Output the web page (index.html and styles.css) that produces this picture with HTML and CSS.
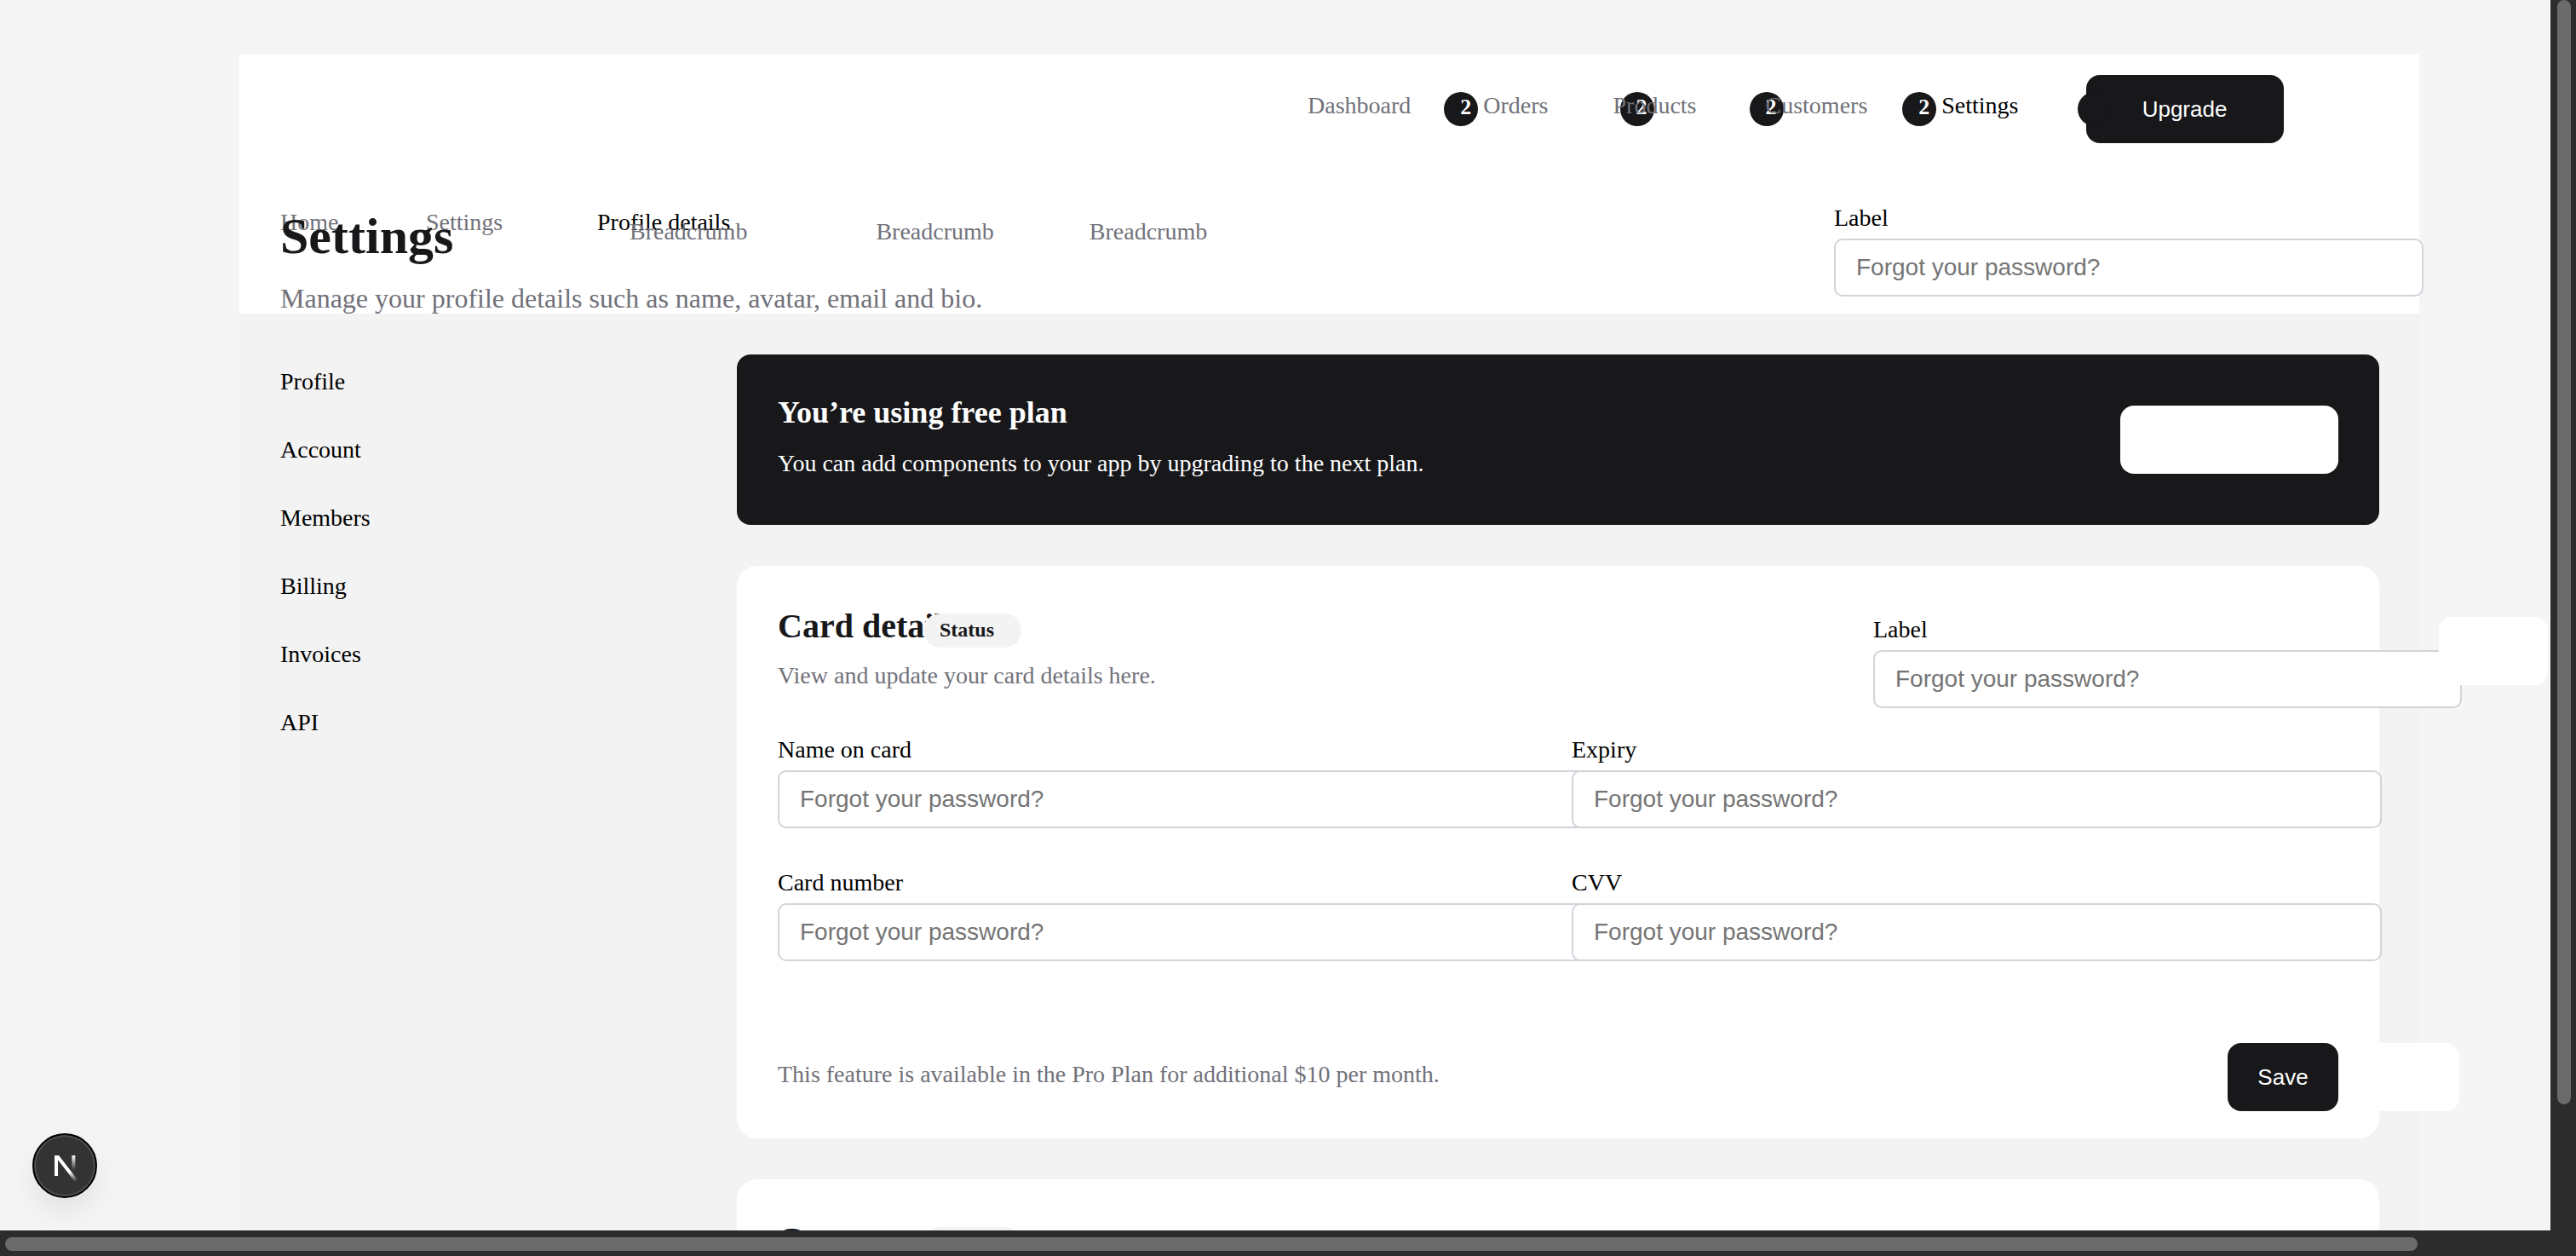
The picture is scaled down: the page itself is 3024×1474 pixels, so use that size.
FILE: index.html
```html
<!DOCTYPE html>
<html lang="en">
<head>
    <meta charset="UTF-8">
    <meta name="viewport" content="width=device-width, initial-scale=1.0">
    <title>Settings</title>
    <link rel="stylesheet" href="styles.css">
</head>
<body>
    <div class="page">
        <header class="header">
            <nav class="nav">
                <a class="nav-link dashboard">Dashboard</a>
                <a class="nav-link orders"><span class="badge">2</span>Orders</a>
                <a class="nav-link products"><span class="badge">2</span>Products</a>
                <a class="nav-link customers"><span class="badge">2</span>Customers</a>
                <a class="nav-link settings active"><span class="badge">2</span>Settings</a>
                <button class="button upgrade"><span class="badge"></span>Upgrade</button>
            </nav>
            <div class="header-row">
                <div class="title-block">
                    <div class="crumbs">
                        <span class="crumb home">Home</span>
                        <span class="crumb middle">Settings</span>
                        <span class="crumb active">Profile details</span>
                    </div>
                    <div class="crumbs second">
                        <span class="crumb">Breadcrumb</span>
                        <span class="crumb">Breadcrumb</span>
                        <span class="crumb">Breadcrumb</span>
                    </div>
                    <div class="title-text">
                        <h1>Settings</h1>
                        <p>Manage your profile details such as name, avatar, email and bio.</p>
                    </div>
                </div>
                <div class="field header-field">
                    <label>Label</label>
                    <input class="input" placeholder="Forgot your password?">
                </div>
            </div>
        </header>

        <div class="content">
            <aside class="sidebar">
                <a>Profile</a>
                <a>Account</a>
                <a>Members</a>
                <a>Billing</a>
                <a>Invoices</a>
                <a>API</a>
            </aside>
            <main class="main">
                <section class="banner">
                    <div class="banner-text">
                        <h2>You’re using free plan</h2>
                        <p>You can add components to your app by upgrading to the next plan.</p>
                    </div>
                    <button class="button white">Upgrade</button>
                </section>

                <section class="card">
                    <div class="card-head">
                        <div class="card-title">
                            <div class="title-line">
                                <h3>Card details</h3>
                                <span class="status">Status</span>
                            </div>
                            <p>View and update your card details here.</p>
                        </div>
                        <div class="field card-field">
                            <label>Label</label>
                            <input class="input" placeholder="Forgot your password?">
                        </div>
                        <button class="button white floating">Save</button>
                    </div>
                    <div class="form">
                        <div class="field">
                            <label>Name on card</label>
                            <input class="input" placeholder="Forgot your password?">
                        </div>
                        <div class="field">
                            <label>Expiry</label>
                            <input class="input" placeholder="Forgot your password?">
                        </div>
                        <div class="field">
                            <label>Card number</label>
                            <input class="input" placeholder="Forgot your password?">
                        </div>
                        <div class="field">
                            <label>CVV</label>
                            <input class="input" placeholder="Forgot your password?">
                        </div>
                    </div>
                    <div class="card-foot">
                        <p>This feature is available in the Pro Plan for additional $10 per month.</p>
                        <span class="foot-ghost"></span>
                        <button class="button save">Save</button>
                    </div>
                </section>

                <section class="card">
                    <div class="card-head">
                        <div class="card-title">
                            <div class="title-line">
                                <h3>Customers</h3>
                                <span class="status">Status</span>
                            </div>
                        </div>
                    </div>
                </section>
            </main>
        </div>
    </div>

    <div class="dev-indicator">
        <svg width="60" height="60" viewBox="0 0 180 180" fill="none">
            <defs>
                <linearGradient id="nFade" x1="109" y1="110" x2="135" y2="142" gradientUnits="userSpaceOnUse">
                    <stop stop-color="#fff"/>
                    <stop offset="1" stop-color="#fff" stop-opacity="0"/>
                </linearGradient>
                <linearGradient id="barFade" x1="121" y1="54" x2="120" y2="106" gradientUnits="userSpaceOnUse">
                    <stop stop-color="#fff"/>
                    <stop offset="1" stop-color="#fff" stop-opacity="0"/>
                </linearGradient>
            </defs>
            <path d="M149.508 157.52L69.142 54H54V125.97H66.114V69.384L139.999 164.845C143.333 162.614 146.509 160.165 149.508 157.52Z" fill="url(#nFade)"/>
            <rect x="115" y="54" width="12" height="72" fill="url(#barFade)"/>
        </svg>
    </div>

    <div class="scrollbar vertical"><span></span></div>
    <div class="scrollbar horizontal"><span></span></div>
</body>
</html>
```

FILE: styles.css
```css
* {
    box-sizing: border-box;
}

html, body {
    height: 100%;
    overflow: hidden;
}

body {
    margin: 0;
    background-color: #f5f5f5;
    color: #000;
    font-family: "Liberation Serif", "Times New Roman", serif;
    font-size: 28px;
    line-height: 32px;
}

h1, h2, h3, p {
    margin: 0;
}

.page {
    width: 2559px;
    margin: 64px 0 0 281px;
    background-color: #f3f3f3;
}

/* header */
.header {
    height: 304px;
    padding-left: 48px;
    background-color: #fff;
}

.nav {
    display: flex;
    align-items: flex-start;
    height: 104px;
    padding: 24px 0 0 1206px;
}

.nav-link {
    position: relative;
    z-index: 0;
    padding-top: 20px;
    color: #71717a;
    white-space: nowrap;
}

.nav-link.active {
    color: #000;
}

.orders { margin-left: 85px; }
.products { margin-left: 76px; }
.customers { margin-left: 81px; }
.settings { margin-left: 87px; }

.badge {
    position: absolute;
    z-index: -1;
    top: 20px;
    width: 40px;
    height: 40px;
    padding-left: 19px;
    border-radius: 50%;
    background-color: #18181b;
    color: #fff;
    font-size: 26px;
    font-weight: bold;
    line-height: 35px;
}

.orders .badge { left: -46px; }
.products .badge { left: 8px; }
.customers .badge { left: -19px; }
.settings .badge { left: -46px; }

.button {
    height: 80px;
    border: none;
    border-radius: 16px;
    background-color: #18181b;
    color: #fff;
    font-family: "Liberation Sans", Arial, sans-serif;
    font-size: 26px;
}

.upgrade {
    position: relative;
    z-index: 0;
    flex: none;
    width: 232px;
    margin-left: 79px;
}

.upgrade .badge {
    left: -10px;
    top: 20px;
    padding: 0;
}

.header-row {
    display: flex;
}

.title-block {
    display: grid;
    flex: none;
    width: 1824px;
}

.title-block > * {
    grid-area: 1 / 1;
}

.crumbs {
    display: flex;
    height: 32px;
    margin-top: 77px;
    color: #71717a;
}

.crumb.active {
    color: #000;
}

.crumb.home {
    width: 171px;
}

.crumb.middle {
    width: 201px;
}

.crumbs.second {
    margin-top: 88px;
    padding-left: 410px;
}

.crumbs.second .crumb:nth-child(2) {
    margin-left: 151px;
}

.crumbs.second .crumb:nth-child(3) {
    margin-left: 112px;
}

.title-text {
    padding-top: 75px;
}

h1 {
    color: #18181b;
    font-size: 60px;
    line-height: 68px;
}

.title-text p {
    margin-top: 21px;
    color: #71717a;
    font-size: 32px;
    line-height: 36px;
}

.field {
    display: flex;
    flex-direction: column;
    gap: 8px;
}

.header-field {
    flex: none;
    width: 692px;
    margin-top: 72px;
}

.input {
    flex: none;
    width: 100%;
    height: 68px;
    padding: 0 24px;
    border: 2px solid #d1d5db;
    border-radius: 10px;
    background-color: #fff;
    font-family: "Liberation Sans", Arial, sans-serif;
    font-size: 28px;
}

.input::placeholder {
    color: #757575;
    opacity: 1;
}

/* body of the page */
.content {
    display: flex;
    height: 1200px;
    padding: 48px 0 0 48px;
}

.sidebar {
    display: flex;
    flex: none;
    flex-direction: column;
    gap: 48px;
    width: 536px;
    padding-top: 16px;
}

.main {
    display: flex;
    flex: none;
    flex-direction: column;
    gap: 48px;
    width: 1928px;
}

.banner {
    display: flex;
    flex: none;
    justify-content: space-between;
    align-items: center;
    height: 200px;
    padding: 0 48px;
    border-radius: 16px;
    background-color: #18181b;
    color: #fff;
}

.banner-text {
    padding-bottom: 8px;
}

.banner h2 {
    margin-bottom: 24px;
    font-size: 36px;
    line-height: 40px;
}

.button.white {
    width: 256px;
    background-color: #fff;
    color: #fff;
}

.card {
    position: relative;
    flex: none;
    padding: 48px;
    border-radius: 24px;
    background-color: #fff;
}

.card-head {
    display: flex;
    justify-content: space-between;
    height: 152px;
}

.title-line {
    display: flex;
    align-items: center;
    height: 48px;
}

h3 {
    width: 171px;
    margin-bottom: 3px;
    color: #18181b;
    font-size: 40px;
    line-height: 48px;
    white-space: nowrap;
}

.status {
    position: relative;
    width: 115px;
    height: 40px;
    margin-top: 8px;
    padding-left: 19px;
    border-radius: 20px;
    background-color: #f3f3f3;
    color: #18181b;
    font-size: 24px;
    font-weight: bold;
    line-height: 38px;
}

.card-title p {
    margin-top: 17px;
    color: #71717a;
}

.card-field {
    flex: none;
    width: 691px;
    margin: 11px -145px 0 0;
}

.button.floating {
    position: absolute;
    top: 60px;
    left: 1998px;
    width: 128px;
}

.form {
    display: grid;
    grid-template-columns: 932px 932px;
    row-gap: 48px;
}

.form .input {
    width: 951px;
}

.card-foot {
    position: relative;
    display: flex;
    justify-content: space-between;
    align-items: center;
    margin-top: 96px;
    margin-bottom: -16px;
    color: #71717a;
}

.card-foot p {
    margin-top: -6px;
}

.foot-ghost {
    position: absolute;
    top: 0;
    left: 1832px;
    width: 142px;
    height: 80px;
    border-radius: 0 16px 16px 0;
    background-color: #fff;
}

.button.save {
    width: 130px;
}

/* overlays */
.dev-indicator {
    position: fixed;
    left: 38px;
    top: 1330px;
    display: flex;
    justify-content: center;
    align-items: center;
    width: 76px;
    height: 76px;
    border: 2px solid #000;
    border-radius: 50%;
    background-color: #333;
    box-shadow: inset 0 0 0 2px #4f4f4f, 0 16px 32px rgba(0, 0, 0, 0.08);
}

.scrollbar {
    position: fixed;
    background-color: #2c2c2c;
}

.scrollbar span {
    position: absolute;
    border-radius: 8px;
    background-color: #6b6b6b;
}

.scrollbar.vertical {
    top: 0;
    right: 0;
    width: 30px;
    height: 1474px;
}

.scrollbar.vertical span {
    top: 0;
    left: 8px;
    width: 16px;
    height: 1296px;
}

.scrollbar.horizontal {
    left: 0;
    bottom: 0;
    width: 3024px;
    height: 30px;
}

.scrollbar.horizontal span {
    top: 8px;
    left: 6px;
    width: 2832px;
    height: 16px;
}
```
